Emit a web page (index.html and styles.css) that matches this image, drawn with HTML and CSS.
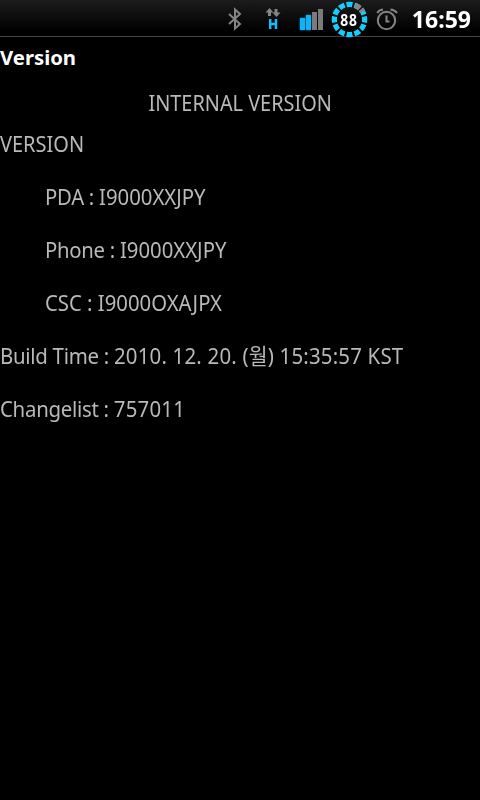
FILE: index.html
```html
<!DOCTYPE html>
<html lang="ko">
<head>
    <meta charset="UTF-8">
    <meta name="viewport" content="width=device-width, initial-scale=1.0">
    <title>Version</title>
    <link rel="stylesheet" href="styles.css">
</head>
<body>
    <div class="status-bar">
        <svg class="icon bluetooth" width="38" height="37" viewBox="216 0 38 37">
            <path d="M229 14 L240 24 L235 28.500 V9.500 L240 14 L229 24"/>
        </svg>
        <svg class="icon data" width="38" height="37" viewBox="254 0 38 37">
            <path class="arrows" d="M269.500 8 L273.500 12.500 H271 V16 H268 V12.500 H265.500 Z M274.500 9 H277.500 V12.500 H280.500 L276.500 17 L272.500 12.500 H274.500 Z"/>
            <path class="network" d="M270.200 19 V29 M276 19 V29 M270.200 24 H276"/>
        </svg>
        <svg class="icon signal" width="38" height="37" viewBox="292 0 38 37">
            <path class="on" d="M300 18 H305 V30 H300 Z M306 15 H311 V30 H306 Z"/>
            <path class="off" d="M312 12 H317 V30 H312 Z M318 9 H323 V30 H318 Z"/>
        </svg>
        <div class="battery">
            <svg class="icon" width="38" height="39" viewBox="330 0 38 39">
                <circle class="ring" cx="349.500" cy="19.500" r="15.200" pathLength="360" transform="rotate(-101 349.500 19.500)"/>
                <path class="used" d="M355.200 5.400 A15.200 15.200 0 0 1 359.800 8.400 M361 9.400 A15.200 15.200 0 0 1 362.700 11.700"/>
            </svg>
            <span class="level">88</span>
        </div>
        <svg class="icon alarm" width="38" height="37" viewBox="368 0 38 37">
            <circle cx="386.500" cy="20.500" r="8.700"/>
            <path d="M386.500 15.500 V21.500 H389.500 M377.300 13 Q378.800 9.800 383 9.500 M390.500 9.500 Q394.800 9.800 397 13"/>
        </svg>
        <span class="clock">16:59</span>
    </div>

    <h1 class="title">Version</h1>

    <div class="content">
        <p class="heading"><span>INTERNAL VERSION</span></p>
        <p class="section"><span>VERSION</span></p>
        <p class="item"><span><b>PDA : </b>I9000XXJPY</span></p>
        <p class="item"><span><b>Phone : </b>I9000XXJPY</span></p>
        <p class="item"><span>CSC : I9000OXAJPX</span></p>
        <p class="info"><span><b>Build Time : </b>2010. 12. 20. (월) 15:35:57 KST</span></p>
        <p class="info"><span><b>Changelist : </b>757011</span></p>
    </div>
</body>
</html>
```

FILE: styles.css
```css
body {
    margin: 0;
    background-color: #000;
    color: #b8bab8;
    font-family: "Noto Sans", "Noto Sans CJK KR", sans-serif;
    font-size: 21.5px;
}
.status-bar {
    display: flex;
    justify-content: flex-end;
    box-sizing: border-box;
    height: 37px;
    padding-right: 9px;
    border-bottom: 1px solid #444;
    background: linear-gradient(#1c1c1c, #000 85%);
}
.icon {
    display: block;
    flex: none;
    fill: none;
    stroke: #858585;
    stroke-width: 2;
}
.data .arrows {
    fill: #858585;
    stroke: none;
}
.data .network {
    stroke: #10bfff;
    stroke-width: 2.4;
}
.signal .on {
    fill: #10b4f5;
    stroke: none;
    filter: drop-shadow(0 0 1px #0087c4);
}
.signal .off {
    fill: #7b7b7b;
    stroke: none;
}
.battery {
    position: relative;
}
.battery .ring {
    stroke: #12cfff;
    stroke-width: 5.2;
    stroke-dasharray: 22 8;
}
.battery .used {
    stroke: #858585;
    stroke-width: 5.6;
}
.level {
    position: absolute;
    left: 0;
    top: 0;
    width: 38px;
    color: #fff;
    font-size: 16.5px;
    font-weight: bold;
    letter-spacing: 1px;
    line-height: 39px;
    text-align: center;
    transform: scaleX(0.84);
}
.clock {
    width: 65px;
    color: #fff;
    font-size: 24px;
    font-weight: bold;
    line-height: 38px;
    text-align: right;
    transform: scaleX(0.96);
    transform-origin: right;
}
.title {
    margin: 0;
    height: 41px;
    color: #fff;
    font-size: 20.3px;
    line-height: 41px;
}
.content p {
    margin: 0;
    height: 53px;
    line-height: 53px;
    white-space: nowrap;
}
.content span {
    display: inline-block;
    transform: scaleX(0.93);
    transform-origin: left;
}
.content .heading {
    height: 41px;
    line-height: 50px;
    text-align: center;
}
.content .heading span {
    transform: scaleX(0.925);
    transform-origin: center;
}
.content .section {
    height: 51px;
    line-height: 50px;
}
.content .item {
    padding-left: 45px;
}
.content .item span {
    transform: scaleX(0.945);
}
.content .info span {
    letter-spacing: 0.2px;
    transform: scaleX(0.95);
}
.content b {
    font-weight: normal;
    letter-spacing: -0.3px;
}
```
